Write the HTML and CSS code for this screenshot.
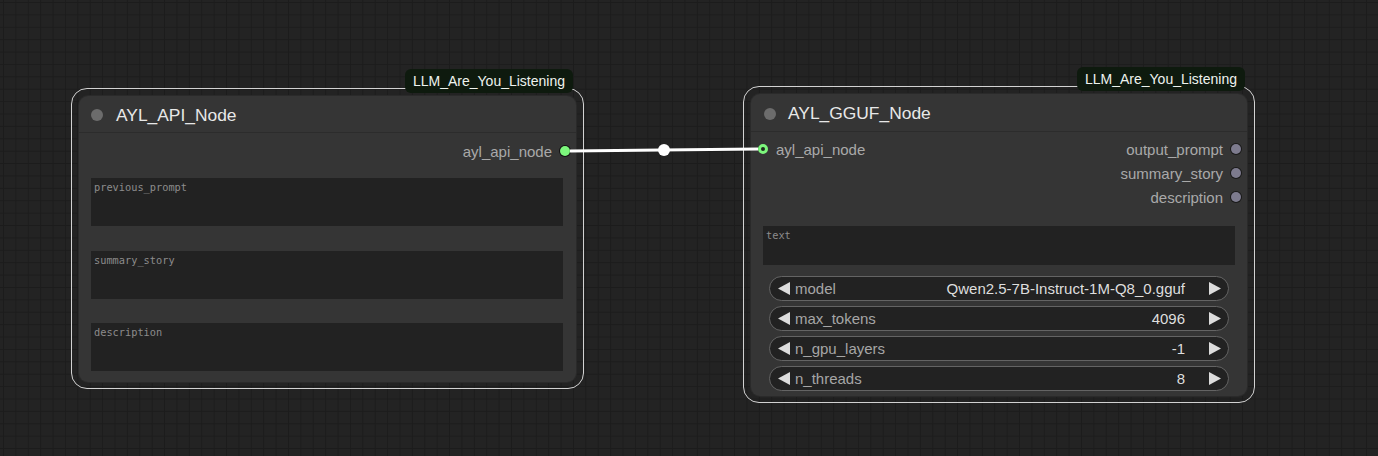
FILE: index.html
```html
<!DOCTYPE html>
<html lang="en">
<head>
<meta charset="utf-8">
<title>AYL nodes</title>
<link rel="stylesheet" href="styles.css">
</head>
<body>
<div class="canvas">
  <div class="node node-api">
    <div class="badge">LLM_Are_You_Listening</div>
    <div class="node-header"><span class="hdot"></span><span class="title">AYL_API_Node</span></div>
    <div class="slots">
      <div class="slot-row end">
        <span class="slot-out">ayl_api_node<i class="dot dot-green"></i></span>
      </div>
    </div>
    <div class="fields fields-api">
      <div class="textbox tall">previous_prompt</div>
      <div class="textbox tall">summary_story</div>
      <div class="textbox tall">description</div>
    </div>
  </div>

  <div class="node node-gguf">
    <div class="badge">LLM_Are_You_Listening</div>
    <div class="node-header"><span class="hdot"></span><span class="title">AYL_GGUF_Node</span></div>
    <div class="slots">
      <div class="slot-row">
        <span class="slot-in"><i class="dot dot-ring"></i>ayl_api_node</span>
        <span class="slot-out">output_prompt<i class="dot dot-grey"></i></span>
      </div>
      <div class="slot-row end">
        <span class="slot-out">summary_story<i class="dot dot-grey"></i></span>
      </div>
      <div class="slot-row end">
        <span class="slot-out">description<i class="dot dot-grey"></i></span>
      </div>
    </div>
    <div class="fields fields-gguf">
      <div class="textbox short">text</div>
    </div>
    <div class="widgets">
      <div class="pill">
        <svg class="arrow" width="12" height="13" viewBox="0 0 12 13"><polygon points="12,0 12,13 0,6.5"/></svg>
        <span class="wlabel">model</span>
        <span class="wvalue">Qwen2.5-7B-Instruct-1M-Q8_0.gguf</span>
        <svg class="arrow" width="12" height="13" viewBox="0 0 12 13"><polygon points="0,0 0,13 12,6.5"/></svg>
      </div>
      <div class="pill">
        <svg class="arrow" width="12" height="13" viewBox="0 0 12 13"><polygon points="12,0 12,13 0,6.5"/></svg>
        <span class="wlabel">max_tokens</span>
        <span class="wvalue">4096</span>
        <svg class="arrow" width="12" height="13" viewBox="0 0 12 13"><polygon points="0,0 0,13 12,6.5"/></svg>
      </div>
      <div class="pill">
        <svg class="arrow" width="12" height="13" viewBox="0 0 12 13"><polygon points="12,0 12,13 0,6.5"/></svg>
        <span class="wlabel">n_gpu_layers</span>
        <span class="wvalue">-1</span>
        <svg class="arrow" width="12" height="13" viewBox="0 0 12 13"><polygon points="0,0 0,13 12,6.5"/></svg>
      </div>
      <div class="pill">
        <svg class="arrow" width="12" height="13" viewBox="0 0 12 13"><polygon points="12,0 12,13 0,6.5"/></svg>
        <span class="wlabel">n_threads</span>
        <span class="wvalue">8</span>
        <svg class="arrow" width="12" height="13" viewBox="0 0 12 13"><polygon points="0,0 0,13 12,6.5"/></svg>
      </div>
    </div>
  </div>

  <svg class="links" width="1378" height="456" viewBox="0 0 1378 456">
    <path d="M570 151 C 620 151, 710 149, 758 149" class="link"/>
    <circle cx="664" cy="150" r="6" class="link-mid"/>
  </svg>
</div>
</body>
</html>
```
FILE: styles.css
```css
* { box-sizing: border-box; }
html, body { margin: 0; padding: 0; }
body {
  width: 1378px;
  height: 456px;
  overflow: hidden;
  font-family: "Liberation Sans", Arial, sans-serif;
  background-color: #232323;
  background-image:
    linear-gradient(to right, #1c1c1c 1px, transparent 1px),
    linear-gradient(to bottom, #1c1c1c 1px, transparent 1px);
  background-size: 12.4px 12.4px;
  background-position: 3px 2px;
}
.canvas {
  position: relative;
  width: 1378px;
  height: 456px;
}
.node {
  position: absolute;
  background: #353535;
  border-radius: 9px;
  box-shadow: 0 0 0 1px #2a2a2a;
  display: flex;
  flex-direction: column;
}
.node::before {
  content: "";
  position: absolute;
  inset: -8px -8px -7px -8px;
  border: 1.5px solid #d2d2d2;
  border-radius: 16px;
  pointer-events: none;
}
.node-api { left: 79px; top: 96px; width: 497px; }
.node-gguf { left: 751px; top: 94px; width: 496px; }

.badge {
  position: absolute;
  right: 3px;
  bottom: calc(100% + 3px);
  height: 24px;
  padding: 0 8px;
  background: #0e1a0e;
  color: #eef3ee;
  font-size: 14px;
  line-height: 24px;
  border-radius: 6px;
  z-index: 2;
}
.node-gguf .badge { right: 2px; }

.node-header {
  height: 37px;
  display: flex;
  align-items: center;
  padding-left: 12px;
  padding-top: 2px;
  border-bottom: 1px solid #2c2c2c;
}
.node-gguf .node-header { height: 38px; padding-left: 13px; }
.hdot {
  width: 12px;
  height: 12px;
  border-radius: 50%;
  background: #6c6c6c;
  margin-right: 13px;
}
.node-gguf .hdot { margin-right: 12px; }
.title {
  color: #e8e8e8;
  font-size: 17.4px;
}

.slots {
  padding-top: 6px;
  display: flex;
  flex-direction: column;
}
.node-gguf .slots { padding-top: 5px; }
.slot-row {
  height: 24px;
  display: flex;
  justify-content: space-between;
  align-items: center;
  padding: 0 6px 0 7px;
  font-size: 15px;
  color: #a9a9a9;
}
.slot-row.end { justify-content: flex-end; }
.slot-out, .slot-in {
  display: flex;
  align-items: center;
}
.slot-out .dot { margin-left: 8px; }
.slot-in .dot { margin-right: 8px; }
.dot {
  display: inline-block;
  width: 10px;
  height: 10px;
  border-radius: 50%;
}
.dot-green {
  background: #7cf77c;
  box-shadow: 0 0 0 1px #111;
}
.dot-ring {
  background: #1f2a1f;
  border: 3px solid #7cf77c;
}
.dot-grey {
  background: #7d7b8e;
  box-shadow: 0 0 0 1px #1a1a1a;
}

.fields {
  display: flex;
  flex-direction: column;
  padding: 0 13px 0 12px;
}
.fields-api {
  margin-top: 15px;
  padding-bottom: 11px;
}
.fields-api .textbox + .textbox { margin-top: 25px; }
.fields-api .textbox:last-child { margin-top: 24px; }
.fields-gguf {
  margin-top: 17px;
  padding: 0 12px;
}
.textbox {
  background: #222222;
  color: #8c8c8c;
  font-family: "DejaVu Sans Mono", "Liberation Mono", monospace;
  font-size: 10.3px;
  padding: 3px 3px 0 3px;
  line-height: 13px;
}
.textbox.tall { height: 48px; }
.textbox.short { height: 39px; }

.widgets {
  margin-top: 11px;
  padding: 0 18px 5px 18px;
  display: flex;
  flex-direction: column;
  gap: 5px;
}
.pill {
  height: 25px;
  border: 1px solid #646464;
  border-radius: 13px;
  background: #222222;
  display: flex;
  align-items: center;
  padding: 0 7px 0 8px;
  font-size: 15px;
}
.arrow { fill: #dcdcdc; flex: none; }
.wlabel {
  flex: 1;
  margin-left: 5px;
  color: #a6a6a6;
}
.wvalue {
  color: #dedede;
  margin-right: 24px;
}

.links {
  position: absolute;
  left: 0;
  top: 0;
  pointer-events: none;
  z-index: 3;
}
.link {
  fill: none;
  stroke: #ffffff;
  stroke-width: 3;
}
.link-mid { fill: #ffffff; }
```
